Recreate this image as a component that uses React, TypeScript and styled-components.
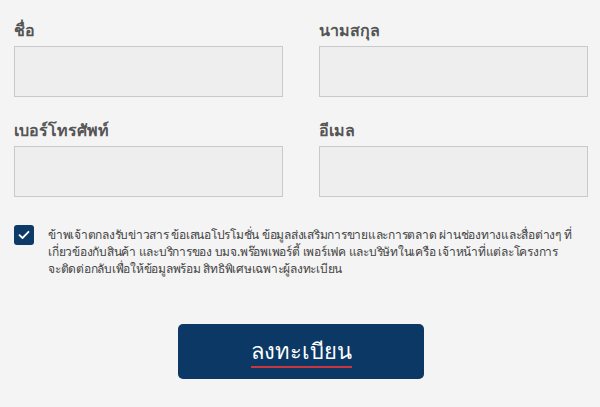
import React from "react";
import styled, { createGlobalStyle } from "styled-components";

const Global = createGlobalStyle`
  html, body { margin: 0; padding: 0; background: #f4f4f4; }
  body { font-family: "Noto Sans", "DejaVu Sans", sans-serif; }
`;

const Form = styled.form`
  padding: 18px 12px 0 14px;
`;

const Grid = styled.div`
  display: grid;
  grid-template-columns: 269px 269px;
  column-gap: 36px;
  row-gap: 21px;
`;

const Field = styled.div`
  display: flex;
  flex-direction: column;
`;

const Label = styled.label`
  font-size: 16px;
  font-weight: 700;
  line-height: 24px;
  color: #555;
  margin-bottom: 4px;
`;

const Input = styled.input`
  box-sizing: border-box;
  height: 51px;
  width: 100%;
  background: #eeeeee;
  border: 1px solid #c9c9c9;
  border-radius: 0;
  outline: none;
`;

const Consent = styled.div`
  display: flex;
  align-items: flex-start;
  gap: 14px;
  margin-top: 28px;
`;

const Check = styled.span`
  flex: 0 0 20px;
  width: 20px;
  height: 20px;
  border-radius: 3px;
  background: #0d3a68;
  display: flex;
  align-items: center;
  justify-content: center;
`;

const ConsentText = styled.p`
  margin: 1px 0 0;
  font-size: 12px;
  letter-spacing: -0.25px;
  line-height: 17px;
  color: #444;
`;

const Line = styled.span`
  display: block;
  white-space: nowrap;
`;

const ButtonRow = styled.div`
  display: flex;
  justify-content: center;
  margin-top: 47px;
`;

const Submit = styled.button`
  width: 246px;
  height: 55px;
  border: none;
  border-radius: 5px;
  background: #0c3866;
  color: #fff;
  font-family: inherit;
  font-size: 22px;
  cursor: pointer;
  display: flex;
  align-items: center;
  justify-content: center;
`;

const SubmitText = styled.span`
  border-bottom: 2px solid #c8373f;
  line-height: 28px;
  padding-bottom: 2px;
`;

const lines = [
  "ข้าพเจ้าตกลงรับข่าวสาร ข้อเสนอโปรโมชั่น ข้อมูลส่งเสริมการขายและการตลาด ผ่านช่องทางและสื่อต่างๆ ที่",
  "เกี่ยวข้องกับสินค้า และบริการของ บมจ.พร๊อพเพอร์ตี้ เพอร์เฟค และบริษัทในเครือ เจ้าหน้าที่แต่ละโครงการ",
  "จะติดต่อกลับเพื่อให้ข้อมูลพร้อม สิทธิพิเศษเฉพาะผู้ลงทะเบียน",
];

export default function App() {
  return (
    <>
      <Global />
      <Form onSubmit={(e) => e.preventDefault()}>
        <Grid>
          <Field>
            <Label>ชื่อ</Label>
            <Input />
          </Field>
          <Field>
            <Label>นามสกุล</Label>
            <Input />
          </Field>
          <Field>
            <Label>เบอร์โทรศัพท์</Label>
            <Input />
          </Field>
          <Field>
            <Label>อีเมล</Label>
            <Input />
          </Field>
        </Grid>
        <Consent>
          <Check>
            <svg width="12" height="10" viewBox="0 0 12 10">
              <path d="M1.5 5.2 L4.5 8 L10.5 1.8" fill="none" stroke="#fff" strokeWidth="1.8" strokeLinecap="round" strokeLinejoin="round" />
            </svg>
          </Check>
          <ConsentText>
            {lines.map((l) => (
              <Line key={l}>{l}</Line>
            ))}
          </ConsentText>
        </Consent>
        <ButtonRow>
          <Submit type="submit">
            <SubmitText>ลงทะเบียน</SubmitText>
          </Submit>
        </ButtonRow>
      </Form>
    </>
  );
}
